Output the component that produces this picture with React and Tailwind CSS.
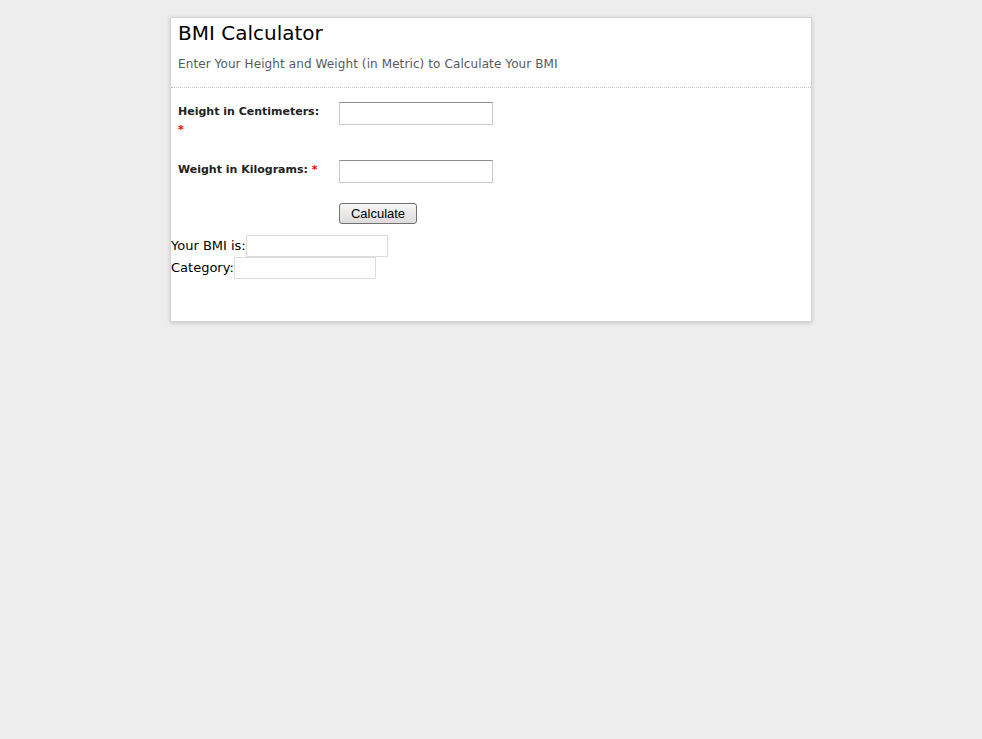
import React from 'react';

const font = { fontFamily: '"DejaVu Sans", Verdana, sans-serif' };

const Field = ({ label, className = '' }) => (
  <div className={`flex items-start ${className}`}>
    <label className="w-[148px] text-[11px] leading-[18px] font-bold text-[#222] pt-[1px]">
      {label} <span className="text-[#ff0000]">*</span>
    </label>
    <input
      type="text"
      className="ml-[13px] w-[154px] h-[23px] border border-[#c8c8c8] border-t-[#8e8e8e] bg-white outline-none"
    />
  </div>
);

export default function App() {
  return (
    <div className="min-h-[739px] bg-[#ededed] pt-[17px]" style={font}>
      <div className="ml-[170px] w-[642px] bg-white border border-[#d6d6d6] shadow-[0_1px_4px_rgba(0,0,0,0.18)] pb-[42px]">
        <div className="px-[7px] pt-[1px] pb-[15px] border-b border-dotted border-[#c4c4c4]">
          <h1 className="text-[20px] leading-[28px] text-black">BMI Calculator</h1>
          <p className="mt-[9px] text-[12px] leading-[16px] tracking-[0.1px] text-[#555a60]">
            Enter Your Height and Weight (in Metric) to Calculate Your BMI
          </p>
        </div>
        <div className="px-[7px] pt-[14px]">
          <Field label="Height in Centimeters:" className="h-[58px]" />
          <Field label="Weight in Kilograms:" />
          <div className="flex pl-[161px] mt-[20px]">
            <button
              className="w-[78px] h-[21px] text-[13px] leading-none text-black border border-[#707070] rounded-[3px] bg-gradient-to-b from-[#f6f6f6] to-[#dcdcdc]"
              style={{ fontFamily: '"Liberation Sans", Arial, sans-serif' }}
            >
              Calculate
            </button>
          </div>
        </div>
        <div className="mt-[11px] text-[13px] leading-[22px] text-black">
          <div className="flex items-center">
            <span>Your BMI is:</span>
            <input type="text" readOnly className="w-[142px] h-[22px] border border-[#dcdcdc] bg-white outline-none" />
          </div>
          <div className="flex items-center">
            <span>Category:</span>
            <input type="text" readOnly className="w-[142px] h-[22px] border border-[#dcdcdc] bg-white outline-none" />
          </div>
        </div>
      </div>
    </div>
  );
}
